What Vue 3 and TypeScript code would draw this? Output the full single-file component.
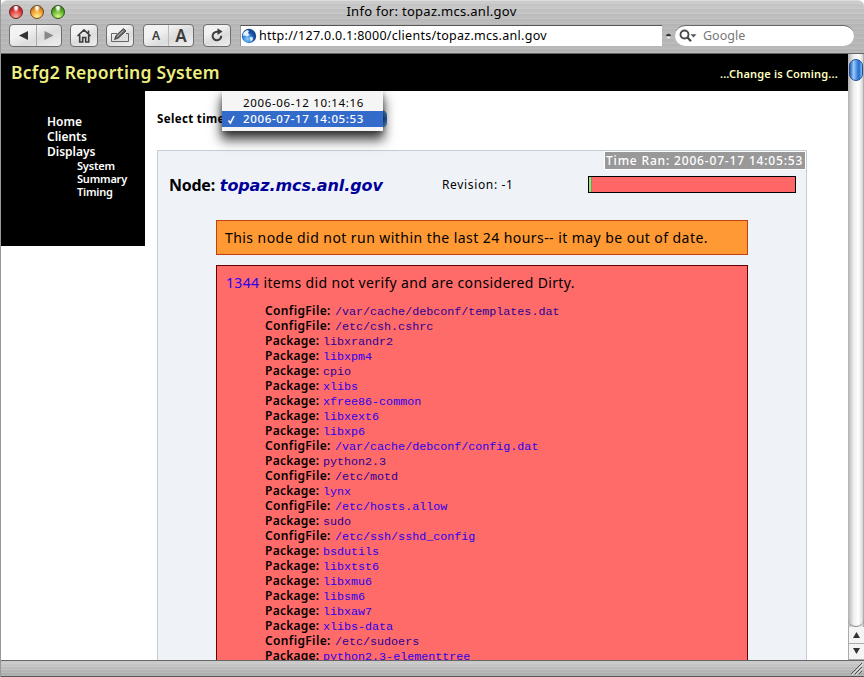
<script setup lang="ts">
interface Item { kind: string; name: string; visited?: boolean }

const items: Item[] = [
  { kind: 'ConfigFile', name: '/var/cache/debconf/templates.dat', visited: true },
  { kind: 'ConfigFile', name: '/etc/csh.cshrc', visited: true },
  { kind: 'Package', name: 'libxrandr2', visited: true },
  { kind: 'Package', name: 'libxpm4' },
  { kind: 'Package', name: 'cpio', visited: true },
  { kind: 'Package', name: 'xlibs' },
  { kind: 'Package', name: 'xfree86-common' },
  { kind: 'Package', name: 'libxext6' },
  { kind: 'Package', name: 'libxp6' },
  { kind: 'ConfigFile', name: '/var/cache/debconf/config.dat' },
  { kind: 'Package', name: 'python2.3', visited: true },
  { kind: 'ConfigFile', name: '/etc/motd', visited: true },
  { kind: 'Package', name: 'lynx' },
  { kind: 'ConfigFile', name: '/etc/hosts.allow' },
  { kind: 'Package', name: 'sudo', visited: true },
  { kind: 'ConfigFile', name: '/etc/ssh/sshd_config' },
  { kind: 'Package', name: 'bsdutils' },
  { kind: 'Package', name: 'libxtst6' },
  { kind: 'Package', name: 'libxmu6' },
  { kind: 'Package', name: 'libsm6' },
  { kind: 'Package', name: 'libxaw7' },
  { kind: 'Package', name: 'xlibs-data' },
  { kind: 'ConfigFile', name: '/etc/sudoers', visited: true },
  { kind: 'Package', name: 'python2.3-elementtree' },
]
const lights = ['red', 'amber', 'green']
const displays = ['System', 'Summary', 'Timing']
</script>

<template>
  <div class="window">
    <header class="chrome">
      <div class="titlebar">
        <div class="lights"><i v-for="l in lights" :key="l" :class="['light', l]"></i></div>
        <span class="title">Info for: topaz.mcs.anl.gov</span>
      </div>
      <div class="toolbar">
        <div class="btn nav">
          <svg width="51" height="21" viewBox="0 0 51 21">
            <path d="M9 10.500 18 6v9z" fill="#333" />
            <path d="M43.500 10.500 34.500 6v9z" fill="#888" />
            <path d="M26.500 0v21" stroke="#aaa" />
          </svg>
        </div>
        <div class="btn home">
          <svg width="26" height="21" viewBox="0 0 26 21">
            <path d="M6.500 11 13 4.800l6.500 6.200M17.500 8.500V5.500M8.700 10v7h3v-4.500h3V17h3v-7" fill="none" stroke="#3c3c3c" stroke-width="1.600" />
          </svg>
        </div>
        <div class="btn edit">
          <svg width="26" height="21" viewBox="0 0 26 21">
            <path d="M10 8.500H4.500v8h17v-8H19" fill="none" stroke="#666" />
            <path d="M7.500 14.500 9 10.500 16.500 3.500l2.500 2.500-7.500 7z" fill="#666" stroke="#333" stroke-width=".8" />
            <path d="m10 11.500 6.500-6" stroke="#bbb" />
          </svg>
        </div>
        <div class="btn sizes"><span class="small-a">A</span><span class="big-a">A</span></div>
        <div class="btn reload">
          <svg width="26" height="21" viewBox="0 0 26 21">
            <path d="M17.200 10.800a4.300 4.300 0 1 1-4.200-4.100h1.500" fill="none" stroke="#3c3c3c" stroke-width="2" />
            <path d="M13.500 3.300v6.600l5-3.300z" fill="#3c3c3c" />
          </svg>
        </div>
        <div class="address">
          <svg width="16" height="16" viewBox="0 0 16 16">
            <defs><radialGradient id="globe" cx=".4" cy=".7"><stop offset="0" stop-color="#8fd0ff" /><stop offset=".6" stop-color="#3b84d4" /><stop offset="1" stop-color="#174a99" /></radialGradient></defs>
            <circle cx="8" cy="8" r="7.200" fill="url(#globe)" />
            <path d="M2.500 4.500 6 2l2 1-1 2 1.500 2L6 8.500 4 7.500 2 8zM9 9l3 .5-.5 2.500-2 1.500z" fill="#e3f2ff" />
          </svg>
          <span class="url">http://127.0.0.1:8000/clients/topaz.mcs.anl.gov</span>
        </div>
        <svg class="grip" width="7" height="8" viewBox="0 0 7 8"><circle cx="3.500" cy="4.500" r="2" fill="#eee" /><path d="M1 4.200a2.500 2.500 0 0 1 5 0z" fill="#333" /></svg>
        <div class="search">
          <svg width="20" height="16" viewBox="0 0 20 16">
            <circle cx="6.500" cy="6.500" r="4" fill="none" stroke="#4a4a4a" stroke-width="1.900" />
            <path d="m9.500 9.500 3.500 3.800" stroke="#4a4a4a" stroke-width="2.300" />
            <path d="M12.500 6.300h6l-3 3.200z" fill="#555" />
          </svg>
          <span class="google">Google</span>
        </div>
      </div>
    </header>

    <div class="viewport">
      <div class="page">
        <div class="banner">
          <span class="brand">Bcfg2 Reporting System</span>
          <span class="tagline">...Change is Coming...</span>
        </div>
        <div class="columns">
          <nav class="menu">
            <a>Home</a>
            <a>Clients</a>
            <a>Displays</a>
            <div class="submenu"><a v-for="d in displays" :key="d">{{ d }}</a></div>
          </nav>
          <main class="content">
            <div class="selector">
              <span class="select-label">Select time:</span>
              <i class="select-cap"></i>
              <div class="popup">
                <div class="option">2006-06-12 10:14:16</div>
                <div class="option chosen">
                  <svg width="9" height="11" viewBox="0 0 9 11"><path d="m1.500 6.500 1.900 2.500L7 2" fill="none" stroke="#fff" stroke-width="1.600" /></svg>2006-07-17 14:05:53
                </div>
              </div>
            </div>
            <section class="card">
              <div class="time-row"><span class="time-ran">Time Ran: 2006-07-17 14:05:53</span></div>
              <div class="node-row">
                <h2 class="node">Node: <em>topaz.mcs.anl.gov</em></h2>
                <span class="revision">Revision: -1</span>
                <div class="status"><i></i></div>
              </div>
              <div class="warning">This node did not run within the last 24 hours-- it may be out of date.</div>
              <div class="dirty">
                <p class="dirty-text"><a>1344</a> items did not verify and are considered Dirty.</p>
                <ul>
                  <li v-for="i in items" :key="i.name">
                    <b :class="{ config: i.kind === 'ConfigFile' }">{{ i.kind }}:</b><a class="file" :class="{ visited: i.visited }">{{ i.name }}</a>
                  </li>
                </ul>
              </div>
            </section>
          </main>
        </div>
      </div>
      <aside class="scrollbar">
        <div class="track"><div class="thumb"></div></div>
        <div class="arrow"><svg width="9" height="8" viewBox="0 0 9 8"><path d="M4.500 1 8 7H1z" fill="#333" /></svg></div>
        <div class="arrow"><svg width="9" height="8" viewBox="0 0 9 8"><path d="M4.500 7 8 1H1z" fill="#333" /></svg></div>
      </aside>
    </div>
    <footer class="bottom">
      <svg width="13" height="13" viewBox="0 0 13 13"><path d="M1 12 12 1M5 12l7-7M9 12l3-3" stroke="#555" /><path d="m2 13 11-11M6 13l7-7" stroke="#eee" stroke-width=".7" /></svg>
    </footer>
  </div>
</template>

<style>
body { margin: 0; background: #fff; overflow: hidden; }
</style>

<style scoped>
* { box-sizing: border-box; }
.window { width: 864px; height: 677px; display: flex; flex-direction: column; overflow: hidden; font-family: "Noto Sans", "Open Sans", sans-serif; color: #000; white-space: nowrap; border-left: 1px solid #999; }
.chrome { height: 54px; flex: none; border-top: 1px solid #ddd; border-bottom: 1px solid #666; border-radius: 6px 6px 0 0; background: repeating-linear-gradient(#fff0 0 2px, #ffffff14 2px 3px, #00000006 3px 5px), linear-gradient(#ccc, #b9b9b9 45%, #b8b8b8); }
.titlebar { height: 22px; display: grid; grid-template-columns: 100px 1fr 102px; align-items: center; }
.lights { display: flex; gap: 7px; padding: 0 0 1px 8px; }
.light { width: 14px; height: 14px; border-radius: 50%; border: 1px solid #555; }
.red { background: radial-gradient(ellipse at 50% 10%, #fff 0 12%, transparent 35%), radial-gradient(circle at 50% 90%, #ffb0a8, #d93a38 55%, #7c1715); border-color: #6a2424; }
.amber { background: radial-gradient(ellipse at 50% 10%, #fff 0 12%, transparent 35%), radial-gradient(circle at 50% 90%, #fff59a, #f09a28 55%, #8a4708); border-color: #764616; }
.green { background: radial-gradient(ellipse at 50% 10%, #fff 0 12%, transparent 35%), radial-gradient(circle at 50% 90%, #d8ff8a, #5aae26 55%, #205c08); border-color: #2c5518; }
.title { text-align: center; font-size: 13px; line-height: 18px; padding-bottom: 2px; letter-spacing: .28px; }
.toolbar { display: flex; align-items: center; height: 23px; margin-top: 1px; padding-left: 8px; }
.btn { height: 23px; border: 1px solid #6e6e6e; border-radius: 4px; background: linear-gradient(155deg, #f2f2f2 0 30%, #dcdcdc 60%, #f0f0f0); display: flex; color: #3c3c3c; }
.nav { width: 53px; }
.home { width: 28px; margin-left: 8px; }
.edit { width: 28px; margin-left: 8px; }
.sizes { width: 51px; margin-left: 9px; }
.sizes span { flex: 1; text-align: center; line-height: 22px; font-weight: 600; }
.small-a { font-size: 12px; border-right: 1px solid #bbb; }
.big-a { font-size: 17px; }
.reload { width: 28px; margin-left: 9px; }
.address { width: 422px; height: 21px; margin-left: 9px; background: #fff; border-top: 1px solid #555; border-left: 1px solid #999; display: flex; align-items: center; }
.url { font-size: 12.500px; line-height: 18px; padding-bottom: 1px; margin-left: 2px; letter-spacing: .28px; }
.grip { margin-left: 3px; }
.search { width: 179px; height: 21px; margin-left: 3px; border-radius: 11px; border-top: 1px solid #666; background: #fff; display: flex; align-items: center; padding-left: 3px; }
.google { font-size: 12.500px; line-height: 18px; padding-bottom: 1px; color: #777; margin-left: 5px; }
.viewport { height: 606px; display: flex; overflow: hidden; background: #fff; }
.page { width: 847px; }
.banner { height: 37px; background: #000; display: flex; justify-content: space-between; align-items: center; padding: 0 10px; }
.brand { color: #eeee80; font-size: 17.500px; font-weight: 600; line-height: 30px; padding-bottom: 2px; letter-spacing: .22px; }
.tagline { color: #ffffc0; font-size: 11px; font-weight: 600; letter-spacing: .18px; padding-top: 1px; }
.columns { display: flex; align-items: flex-start; }
.menu { width: 144px; height: 155px; background: #000; color: #fff; padding: 23px 0 0 46px; display: flex; flex-direction: column; font-size: 12px; font-weight: 600; line-height: 15px; }
.submenu { display: flex; flex-direction: column; padding-left: 30px; font-size: 11px; line-height: 13px; letter-spacing: -.2px; }
.content { margin-left: 12px; width: 650px; }
.selector { height: 59px; position: relative; padding-top: 19px; font-size: 11.500px; font-weight: 700; line-height: 17px; letter-spacing: .35px; }
.select-cap { position: absolute; left: 210px; top: 19px; width: 20px; height: 18px; border-radius: 5px; background: linear-gradient(#6da5e2, #2463b9 50%, #87c3ef); }
.popup { position: absolute; left: 65px; top: 0; width: 161px; height: 40px; padding-top: 4px; background: #f5f5f5; box-shadow: 0 8px 11px 1px #000b, 0 2px 5px #0005; clip-path: inset(0 -20px -28px -20px); font-size: 11.500px; font-weight: 400; letter-spacing: .65px; }
.option { height: 16px; line-height: 16px; padding-left: 21px; }
.chosen { background: #336bcb; color: #fff; padding-left: 5px; display: flex; align-items: center; gap: 7px; font-weight: 500; }
.card { width: 650px; height: 560px; border: 1px solid #c4ccd4; background: #eff3f8; }
.time-row { height: 19px; display: flex; justify-content: flex-end; }
.time-ran { width: 202px; height: 19px; border: 1px solid #fff; background: #999; color: #fff; font-size: 12px; line-height: 17px; padding-left: 1px; font-weight: 500; letter-spacing: .83px; }
.node-row { height: 50px; display: flex; align-items: flex-start; padding: 6px 10px 0 11px; }
.node { margin: 0; width: 273px; font: 700 16px/18px "Noto Sans", sans-serif; letter-spacing: -.25px; }
.node em { font: italic bold 16px/18px "DejaVu Sans", sans-serif; color: #009; letter-spacing: -.1px; margin-left: 1px; }
.revision { width: 146px; font-size: 12px; line-height: 17px; letter-spacing: .65px; }
.status { width: 208px; height: 17px; border: 1px solid #000; background: #ff6666; display: flex; }
.status i { width: 3px; background: #a5d880; border-right: 1px solid #6f9f50; }
.warning { margin-left: 58px; width: 532px; height: 35px; border: 1px solid #c04010; background: #ff9933; font-size: 14px; line-height: 33px; padding-left: 8px; letter-spacing: .44px; }
.dirty { margin: 10px 0 0 58px; width: 532px; height: 430px; border: 1px solid #600; background: #ff6b69; padding: 7px 0 0 9px; }
.dirty-text { margin: 0; font-size: 14px; line-height: 20px; letter-spacing: .35px; }
.dirty a { color: #2a00f0; }
ul { list-style: none; margin: 10px 0 0 39px; padding: 0; }
li { height: 15px; display: flex; line-height: 15px; }
li b { width: 58px; font-size: 12px; font-weight: 600; letter-spacing: .25px; }
li b.config { width: 70px; letter-spacing: .37px; }
.dirty .file { font: 11.700px/18px "Liberation Mono", monospace; }
.dirty .visited { color: #2c0096; }
.scrollbar { width: 16px; background: linear-gradient(90deg, #b0b0b0, #eee 35%, #fff 65%, #ddd 90%, #999); display: flex; flex-direction: column; }
.track { height: 573px; padding: 5px 1px 0; border-bottom: 1px solid #888; border-radius: 0 0 8px 8px; }
.thumb { height: 22px; border-radius: 7px; border: 1px solid #234c91; background: linear-gradient(90deg, #2b62b6, #9bcaf8 30%, #4a93e6 55%, #2967c4 75%, #80c4ff); }
.arrow { flex: 1; display: flex; align-items: center; justify-content: center; border-bottom: 1px solid #aaa; background: #f4f4f4; border-left: 1px solid #aaa; }
.bottom { height: 17px; border-top: 1px solid #666; border-bottom: 1px solid #555; background: repeating-linear-gradient(#fff0 0 2px, #ffffff20 2px 3px), linear-gradient(#ccc, #aaa); display: flex; justify-content: flex-end; align-items: center; padding-right: 1px; }
</style>
